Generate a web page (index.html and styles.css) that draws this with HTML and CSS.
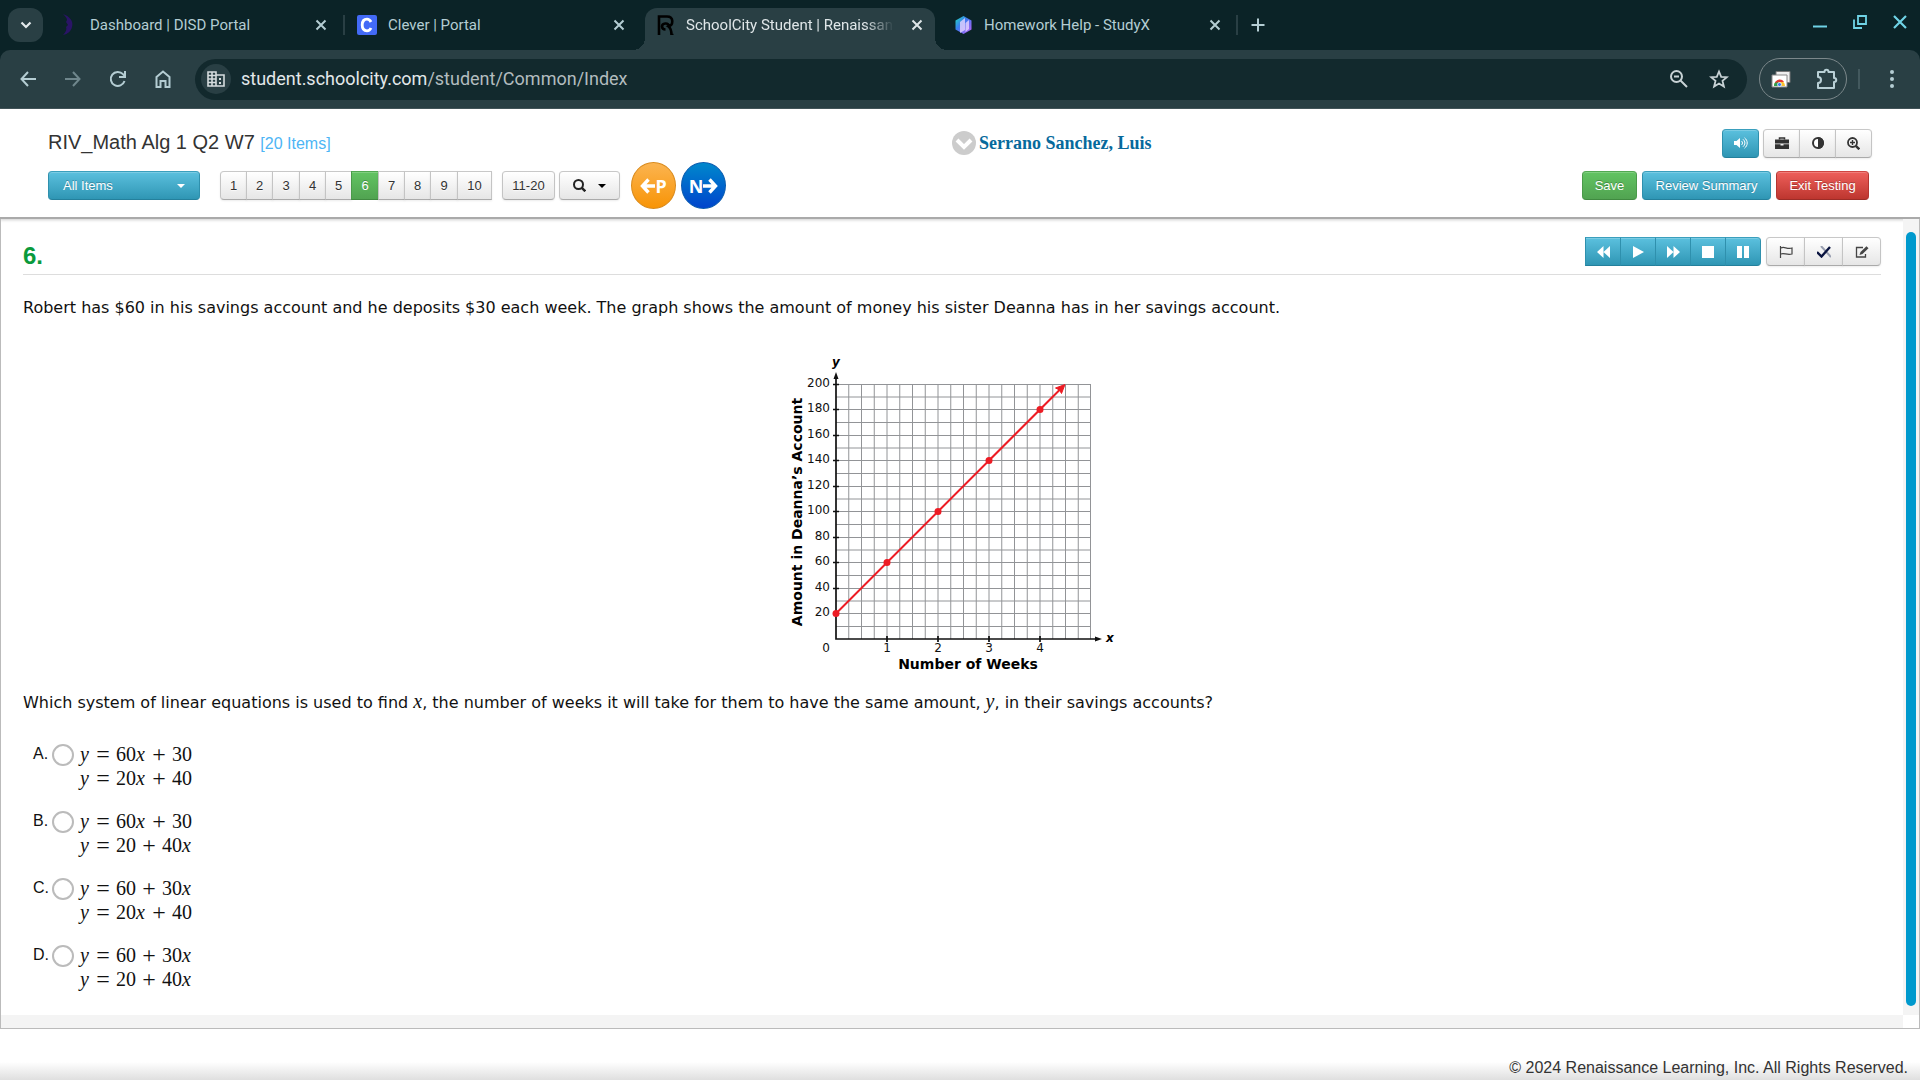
FILE: index.html
```html
<!DOCTYPE html>
<html lang="en">
<head>
<meta charset="utf-8">
<title>SchoolCity Student | Renaissance</title>
<link rel="stylesheet" href="styles.css">
</head>
<body>
<div class="browser">
  <div class="tabstrip">
    <button class="tab-search" aria-label="Search tabs"><svg width="12" height="8" viewBox="0 0 12 8"><path d="M1.500 1.500 6 6l4.500-4.500" fill="none" stroke="#e3eaec" stroke-width="2.200"/></svg></button>
    <div class="tabs">
      <div class="tab">
        <svg class="favicon" width="20" height="24" viewBox="0 0 20 24"><path d="M4 1c6 2 11 7 9 13-1 4-4 7-9 8 3-3 4-6 3-8l2-2-2-3 1-2C8 5 6 3 4 1z" fill="#2a1466"/></svg>
        <span class="tab-title">Dashboard | DISD Portal</span>
        <button class="tab-close" aria-label="Close tab"><svg width="12" height="12" viewBox="0 0 12 12"><path d="M1.500 1.500l9 9m0-9l-9 9" stroke="currentColor" stroke-width="2"/></svg></button>
      </div>
      <div class="tab divided">
        <svg class="favicon" width="20" height="20" viewBox="0 0 20 20"><rect width="20" height="20" rx="2" fill="#436af6"/><path d="M14 7c-1-2-2.500-2.800-4-2.800C7 4.200 5.200 6.500 5.200 10S7 15.800 10 15.800c1.700 0 3.200-1 4-2.800" fill="none" stroke="#fff" stroke-width="2.800"/></svg>
        <span class="tab-title">Clever | Portal</span>
        <button class="tab-close" aria-label="Close tab"><svg width="12" height="12" viewBox="0 0 12 12"><path d="M1.500 1.500l9 9m0-9l-9 9" stroke="currentColor" stroke-width="2"/></svg></button>
      </div>
      <div class="tab active">
        <svg class="favicon" width="20" height="20" viewBox="0 0 20 20"><path d="M4 20V1.500h8c7 0 6.500 8.500 1.500 10 2 1.500 3 4 3 8.500h2M14 11a3.500 3 0 1 0-3.500 3.500" fill="none" stroke="#000" stroke-width="2.600"/></svg>
        <span class="tab-title">SchoolCity Student | Renaissance</span>
        <button class="tab-close" aria-label="Close tab"><svg width="12" height="12" viewBox="0 0 12 12"><path d="M1.500 1.500l9 9m0-9l-9 9" stroke="currentColor" stroke-width="2"/></svg></button>
      </div>
      <div class="tab">
        <svg class="favicon" width="20" height="20" viewBox="0 0 20 20"><defs><linearGradient id="gem" x1="0" y1="0" x2="1" y2="1"><stop offset="0" stop-color="#1fe0b8"/><stop offset=".4" stop-color="#3b7df0"/><stop offset="1" stop-color="#c35cf5"/></linearGradient></defs><path d="M10.500 1l8 4.500v9l-8 4.500-8-4.500v-9z" fill="url(#gem)"/><path d="M7 7l5-4v12l-5 3zM12.500 8l3.500-3v9l-3.500 3z" fill="#e6d4ff" opacity=".8"/></svg>
        <span class="tab-title">Homework Help - StudyX</span>
        <button class="tab-close" aria-label="Close tab"><svg width="12" height="12" viewBox="0 0 12 12"><path d="M1.500 1.500l9 9m0-9l-9 9" stroke="currentColor" stroke-width="2"/></svg></button>
      </div>
    </div>
    <button class="new-tab" aria-label="New tab"><svg width="14" height="14" viewBox="0 0 14 14"><path d="M7 .5v13M.5 7h13" stroke="currentColor" stroke-width="2"/></svg></button>
    <div class="window-controls">
      <button aria-label="Minimize"><svg width="16" height="16" viewBox="0 0 16 16"><path d="M1 12.500h14" stroke="currentColor" stroke-width="2"/></svg></button>
      <button aria-label="Restore"><svg width="16" height="16" viewBox="0 0 16 16"><path d="M6 2h8v8H6zM2 5.500V14h8" fill="none" stroke="currentColor" stroke-width="1.800"/></svg></button>
      <button aria-label="Close"><svg width="16" height="16" viewBox="0 0 16 16"><path d="M2 2l12 12M14 2L2 14" stroke="currentColor" stroke-width="2.200"/></svg></button>
    </div>
  </div>
  <div class="toolbar">
    <div class="nav">
      <button aria-label="Back"><svg width="18" height="18" viewBox="0 0 18 18"><path d="M9 2L2.500 9 9 16M2.500 9H17" fill="none" stroke="currentColor" stroke-width="2"/></svg></button>
      <button class="dim" aria-label="Forward"><svg width="18" height="18" viewBox="0 0 18 18"><path d="M9 2l6.500 7L9 16M15.500 9H1" fill="none" stroke="currentColor" stroke-width="2"/></svg></button>
      <button aria-label="Reload"><svg width="18" height="18" viewBox="0 0 18 18"><path d="M15.500 11A7 7 0 1 1 14 4.200L16 6M16 1v6h-6" fill="none" stroke="currentColor" stroke-width="2"/></svg></button>
      <button aria-label="Home"><svg width="18" height="20" viewBox="0 0 18 20"><path d="M2.500 8L9 2.500 15.500 8v10H11.500v-6h-5v6h-4z" fill="none" stroke="currentColor" stroke-width="2"/></svg></button>
    </div>
    <div class="omnibox">
      <span class="site-chip"><svg width="18" height="16" viewBox="0 0 18 16"><path d="M1 1h8v14H1zM9 4h8v11H9M1 4.500h8M1 8h8M1 11.500h8M5 1v14" fill="none" stroke="#d5dcde" stroke-width="1.600"/><path d="M12 7h2v2h-2zM12 11h2v2h-2z" fill="#d5dcde"/></svg></span>
      <span class="url"><b>student.schoolcity.com</b>/student/Common/Index</span>
      <button aria-label="Zoom"><svg width="20" height="20" viewBox="0 0 20 20"><circle cx="7.500" cy="7.500" r="5.500" fill="none" stroke="currentColor" stroke-width="2"/><path d="M11.500 11.500L18 18M5 7.500h5" stroke="currentColor" stroke-width="2"/></svg></button>
      <button aria-label="Bookmark this page"><svg width="20" height="20" viewBox="0 0 20 20"><path d="M10 2.500l2.200 5.300 5.700.4-4.400 3.700 1.400 5.600L10 14.500l-4.900 3 1.400-5.600-4.400-3.700 5.700-.4z" fill="none" stroke="currentColor" stroke-width="1.800"/></svg></button>
    </div>
    <div class="extensions">
      <button aria-label="Remote desktop"><svg width="20" height="18" viewBox="0 0 20 18"><path d="M5 1.500h14v11H5z" fill="#eee" stroke="#777"/><path d="M1 5h15v12H1z" fill="#fff" stroke="#888"/><path d="M3 16a5.500 5.500 0 0 1 11 0z" fill="#fbc02d"/><path d="M3 16a5.500 5.500 0 0 1 4-5.500L9 16z" fill="#2e9e4f"/><path d="M4 13c1-4 7-5 9-1l-5 0z" fill="#e53a2f"/><circle cx="8.500" cy="14.500" r="2" fill="#3f7de8" stroke="#fff" stroke-width=".7"/></svg></button>
      <button aria-label="Extensions"><svg width="22" height="22" viewBox="0 0 22 22"><path d="M2 4h6.500c0-3 4-3 4 0H18v6c3 0 3 4 0 4v6H2v-5c4 0 4-6 0-6z" fill="none" stroke="#b9d0d6" stroke-width="2" stroke-linejoin="round"/></svg></button>
    </div>
    <span class="bar"></span>
    <button class="menu" aria-label="Menu"><svg width="6" height="20" viewBox="0 0 6 20"><g fill="currentColor"><circle cx="3" cy="3" r="2"/><circle cx="3" cy="10" r="2"/><circle cx="3" cy="17" r="2"/></g></svg></button>
  </div>
</div>

<header class="header">
  <div class="title-row">
    <h1 class="test-title">RIV_Math Alg 1 Q2 W7 <span>[20 Items]</span></h1>
    <a class="student" href="#"><svg width="24" height="24" viewBox="0 0 24 24"><circle cx="12" cy="12" r="12" fill="#ccc"/><path d="M5 9l7 7 7-7" fill="none" stroke="#fff" stroke-width="4"/></svg>Serrano Sanchez, Luis</a>
    <div class="tools">
      <button class="btn info w37" aria-label="Read aloud"><svg width="14" height="12" viewBox="0 0 14 12"><path d="M0 4h2.500L6 1v10L2.500 8H0z" fill="#fff"/><path d="M7.500 4c1.300 1 1.300 3 0 4M9 2.300c2.500 2 2.500 5.400 0 7.400M10.500.8c3.600 2.700 3.600 7.700 0 10.400" fill="none" stroke="#fff"/></svg></button>
      <div class="group">
        <button class="btn w37" aria-label="Toolbox"><svg width="14" height="12" viewBox="0 0 14 12"><path d="M4.500 2.500V1h5v1.500" fill="none" stroke="#333" stroke-width="1.500"/><path d="M0 2.500h14v4H0zM0 7.300h5.500v1.200h3V7.300H14V12H0z" fill="#333"/></svg></button>
        <button class="btn w37" aria-label="Contrast"><svg width="12" height="12" viewBox="0 0 12 12"><circle cx="6" cy="6" r="5" fill="#fff" stroke="#333" stroke-width="2"/><path d="M6 0a6 6 0 0 1 0 12z" fill="#333"/></svg></button>
        <button class="btn w37" aria-label="Magnify"><svg width="13" height="13" viewBox="0 0 13 13"><circle cx="5.500" cy="5.500" r="4.500" fill="none" stroke="#333" stroke-width="1.800"/><path d="M8.800 8.800l3.500 3.500" stroke="#333" stroke-width="2.400"/><path d="M5.500 3v5M3 5.500h5" stroke="#333" stroke-width="1.400"/></svg></button>
      </div>
    </div>
  </div>
  <div class="nav-row">
    <button class="btn info all-items">All Items<i class="caret"></i></button>
    <div class="group pages">
      <button class="btn">1</button><button class="btn">2</button><button class="btn">3</button><button class="btn">4</button><button class="btn">5</button><button class="btn success">6</button><button class="btn">7</button><button class="btn">8</button><button class="btn">9</button><button class="btn ten">10</button>
    </div>
    <button class="btn range">11-20</button>
    <button class="btn search" aria-label="Search items"><svg width="13" height="13" viewBox="0 0 13 13"><circle cx="5.500" cy="5.500" r="4.500" fill="none" stroke="#222" stroke-width="2"/><path d="M8.800 8.800l3.500 3.500" stroke="#222" stroke-width="2.400"/></svg><i class="caret"></i></button>
    <button class="round prev"><svg width="15" height="16" viewBox="0 0 15 16"><path d="M8.500 1.500L2.500 8l6 6.500M3 8h12" fill="none" stroke="#fff" stroke-width="3.400"/></svg>P</button>
    <button class="round next">N<svg width="15" height="16" viewBox="0 0 15 16"><path d="M6.500 1.500l6 6.500-6 6.500M12 8H0" fill="none" stroke="#fff" stroke-width="3.400"/></svg></button>
    <div class="actions">
      <button class="btn success w55">Save</button>
      <button class="btn info w129">Review Summary</button>
      <button class="btn danger w93">Exit Testing</button>
    </div>
  </div>
</header>

<main class="panel">
  <section class="content">
    <div class="question-head">
      <h2>6.</h2>
      <div class="group media">
        <button class="btn info" aria-label="Rewind"><svg width="13" height="12" viewBox="0 0 13 12"><path d="M6.500 0v12L0 6zM13 0v12L6.500 6z" fill="#fff"/></svg></button>
        <button class="btn info" aria-label="Play"><svg width="12" height="12" viewBox="0 0 12 12"><path d="M1 0l11 6-11 6z" fill="#fff"/></svg></button>
        <button class="btn info" aria-label="Forward"><svg width="13" height="12" viewBox="0 0 13 12"><path d="M0 0l6.500 6L0 12zM6.500 0L13 6l-6.500 6z" fill="#fff"/></svg></button>
        <button class="btn info" aria-label="Stop"><svg width="12" height="12" viewBox="0 0 12 12"><path d="M0 0h12v12H0z" fill="#fff"/></svg></button>
        <button class="btn info" aria-label="Pause"><svg width="12" height="12" viewBox="0 0 12 12"><path d="M0 0h5v12H0zM7 0h5v12H7z" fill="#fff"/></svg></button>
      </div>
      <div class="group marks">
        <button class="btn" aria-label="Flag"><svg width="14" height="12" viewBox="0 0 14 12"><path d="M1.500 0v12M2 2c3-2 6 1.500 11 0v6c-5 1.500-8-1.500-11 0" fill="none" stroke="#444" stroke-width="1.200"/></svg></button>
        <button class="btn" aria-label="Eliminate choices"><svg width="14" height="12" viewBox="0 0 14 12"><path d="M4 0l10 11" stroke="#999fb0" stroke-width="2"/><path d="M0 6l4.500 4.500L13 1" fill="none" stroke="#0a1440" stroke-width="2.400"/></svg></button>
        <button class="btn" aria-label="Notes"><svg width="14" height="12" viewBox="0 0 14 12"><path d="M8 1.500H1.500v9.500h9V8" fill="none" stroke="#444" stroke-width="1.300"/><path d="M4.500 9l1-3L11.500.3l2 2L7.500 8z" fill="#444"/></svg></button>
      </div>
    </div>
    <p class="stem">Robert has $60 in his savings account and he deposits $30 each week. The graph shows the amount of money his sister Deanna has in her savings account.</p>
    <figure class="graph">
      <svg width="360" height="340" viewBox="0 0 360 340" role="img" aria-label="Line through (0, 20), (1, 60), (2, 100), (3, 140) and (4, 180)">
        <path d="M78.750 44V299M91.500 44V299M104.250 44V299M117 44V299M129.750 44V299M142.500 44V299M155.250 44V299M168 44V299M180.750 44V299M193.500 44V299M206.250 44V299M219 44V299M231.750 44V299M244.500 44V299M257.250 44V299M270 44V299M282.750 44V299M295.500 44V299M308.250 44V299M320.500 44V299M66 44.500H321M66 57H321M66 69.500H321M66 82.500H321M66 95.500H321M66 108H321M66 120.500H321M66 133.500H321M66 146.500H321M66 159H321M66 171.500H321M66 184.500H321M66 197.500H321M66 210H321M66 222.500H321M66 235.500H321M66 248.500H321M66 261H321M66 273.500H321M66 286.500H321" stroke="#929497" fill="none"/>
        <path d="M66 38V299H326M63 44.500h6M63 69.500h6M63 95.500h6M63 120.500h6M63 146.500h6M63 171.500h6M63 197.500h6M63 222.500h6M63 248.500h6M63 273.500h6M117 296v6M168 296v6M219 296v6M270 296v6" stroke="#111" stroke-width="1.700" fill="none"/>
        <path d="M66 32l2.500 7h-5zM332 299l-7 2.500v-5z" fill="#111"/>
        <path d="M66 273.500L290 49.500" stroke="#ed1c24" stroke-width="2"/>
        <path d="M295 44.500l-3.500 9-2-3.500-4-2z" fill="#ed1c24" stroke="#ed1c24"/>
        <g fill="#ed1c24"><circle cx="66" cy="273.500" r="3.500"/><circle cx="117" cy="222.500" r="3.500"/><circle cx="168" cy="171.500" r="3.500"/><circle cx="219" cy="120.500" r="3.500"/><circle cx="270" cy="69.500" r="3.500"/></g>
        <g class="ticks" text-anchor="end"><text x="60" y="47">200</text><text x="60" y="72">180</text><text x="60" y="98">160</text><text x="60" y="123">140</text><text x="60" y="149">120</text><text x="60" y="174">100</text><text x="60" y="200">80</text><text x="60" y="225">60</text><text x="60" y="251">40</text><text x="60" y="276">20</text><text x="60" y="312">0</text></g>
        <g class="ticks" text-anchor="middle"><text x="117" y="312">1</text><text x="168" y="312">2</text><text x="219" y="312">3</text><text x="270" y="312">4</text></g>
        <text class="axis-letter" x="62" y="26">y</text><text class="axis-letter" x="336" y="302">x</text>
        <text class="axis-title" x="198" y="329" text-anchor="middle">Number of Weeks</text>
        <text class="axis-title" transform="translate(32 172) rotate(-90)" text-anchor="middle">Amount in Deanna’s Account</text>
      </svg>
    </figure>
    <p class="stem">Which system of linear equations is used to find <var>x</var>, the number of weeks it will take for them to have the same amount, <var>y</var>, in their savings accounts?</p>
    <div class="choices">
      <label class="choice"><span class="letter">A.</span><input type="radio" name="answer"><span class="system"><span><var>y</var><i>=</i>60<var>x</var><i>+</i>30</span><span><var>y</var><i>=</i>20<var>x</var><i>+</i>40</span></span></label>
      <label class="choice"><span class="letter">B.</span><input type="radio" name="answer"><span class="system"><span><var>y</var><i>=</i>60<var>x</var><i>+</i>30</span><span><var>y</var><i>=</i>20<i>+</i>40<var>x</var></span></span></label>
      <label class="choice"><span class="letter">C.</span><input type="radio" name="answer"><span class="system"><span><var>y</var><i>=</i>60<i>+</i>30<var>x</var></span><span><var>y</var><i>=</i>20<var>x</var><i>+</i>40</span></span></label>
      <label class="choice"><span class="letter">D.</span><input type="radio" name="answer"><span class="system"><span><var>y</var><i>=</i>60<i>+</i>30<var>x</var></span><span><var>y</var><i>=</i>20<i>+</i>40<var>x</var></span></span></label>
    </div>
  </section>
  <div class="track-y"><div class="thumb"></div></div>
  <div class="track-x"></div>
</main>
<footer class="footer">© 2024 Renaissance Learning, Inc. All Rights Reserved.</footer>
</body>
</html>
```
FILE: styles.css
```css
* { box-sizing: border-box; }
body {
  margin: 0;
  min-height: 100vh;
  display: flex;
  flex-direction: column;
  background: #fff;
  color: #333;
  font-family: "Liberation Sans", Arial, sans-serif;
}
button { font: inherit; border: 0; padding: 0; background: none; color: inherit; }
button, .student, .site-chip { display: flex; align-items: center; justify-content: center; }
svg { display: block; flex: none; }

/* Browser frame */
.browser { background: #0b2327; color: #b4cdd3; font-family: Roboto, sans-serif; }
.tabstrip { display: flex; height: 50px; padding: 8px 12px 0 8px; }
.tab-search { width: 35px; height: 34px; border-radius: 12px; background: #293f44; }
.tabs { display: flex; flex: 0 1 1191px; gap: 8px; min-width: 0; margin-left: 2px; padding-left: 4px; }
.tab {
  position: relative;
  display: flex;
  flex: 0 1 290px;
  min-width: 0;
  align-items: center;
  height: 42px;
  padding: 0 11px 8px 10px;
}
.tab-title {
  flex: 1;
  margin: 0 16px 0 11px;
  overflow: hidden;
  white-space: nowrap;
  font-size: 15px;
  line-height: 20px;
}
.tab-close { width: 14px; height: 20px; }
.active { background: #293f44; border-radius: 12px 12px 0 0; color: #dfe6e8; }
.active .tab-title {
  -webkit-mask-image: linear-gradient(90deg, #000 86%, transparent);
  mask-image: linear-gradient(90deg, #000 86%, transparent);
}
.active::before, .active::after {
  content: "";
  position: absolute;
  bottom: 0;
  width: 12px;
  height: 12px;
}
.active::before { left: -12px; background: radial-gradient(circle at 0 0, transparent 12px, #293f44 12px); }
.active::after { right: -12px; background: radial-gradient(circle at 100% 0, transparent 12px, #293f44 12px); }
.divided::before { content: ""; position: absolute; left: -4px; top: 7px; width: 2px; height: 20px; background: #293f44; }
.new-tab { width: 38px; height: 20px; margin-top: 7px; padding-left: 4px; border-left: 2px solid #293f44; }
.window-controls { display: flex; gap: 24px; height: 28px; margin-left: auto; color: #6fd3e6; }
.window-controls button { width: 16px; }
.toolbar {
  display: flex;
  align-items: center;
  height: 59px;
  padding: 0 24px 0 16px;
  background: #293f44;
  border-bottom: 1px solid #44565b;
  border-radius: 10px 10px 0 0;
}
.nav { display: flex; gap: 22px; padding-right: 21px; }
.nav button { width: 23px; }
.dim { opacity: .5; }
.omnibox {
  display: flex;
  flex: 1;
  align-items: center;
  gap: 20px;
  height: 41px;
  padding: 0 18px 0 6px;
  border-radius: 21px;
  background: #12292d;
  color: #c8d2d5;
}
.site-chip { width: 30px; height: 30px; border-radius: 50%; background: #293f44; }
.url { flex: 1; margin-left: -10px; font-size: 18px; line-height: 24px; color: #b3bcbf; }
.url b { font-weight: 400; color: #e3e8ea; }
.extensions {
  display: flex;
  align-items: center;
  justify-content: space-between;
  width: 88px;
  height: 42px;
  margin-left: 12px;
  padding: 0 8px 0 11px;
  border: 1px solid #7c888b;
  border-radius: 21px;
}
.bar { width: 2px; height: 20px; margin: 0 29px 0 11px; background: #43595e; }
.menu { width: 6px; margin-right: 1px; }

/* Bootstrap-like buttons */
.btn {
  height: 29px;
  padding: 0;
  border: 1px solid #bbb;
  border-color: #c8c8c8 #c4c4c4 #aaa;
  border-radius: 4px;
  background: linear-gradient(#fff, #e6e6e6);
  color: #333;
  font-size: 13px;
  line-height: 20px;
  text-shadow: 0 1px 1px rgba(255, 255, 255, .75);
  box-shadow: 0 1px 2px rgba(0, 0, 0, .08);
}
.info, .success, .danger { color: #fff; text-shadow: 0 -1px 0 rgba(0, 0, 0, .25); box-shadow: inset 0 1px 0 rgba(255, 255, 255, .2); }
.info { background: linear-gradient(#5bc0de, #2f96b4); border-color: #3a9fbd #2f90ad #24809c; }
.success { background: linear-gradient(#62c462, #51a351); border-color: #51a851 #4a9a4a #408a40; }
.danger { background: linear-gradient(#ee5f5b, #bd362f); border-color: #cf4541 #b53530 #9c2c27; }
.group { display: flex; }
.group .btn { border-radius: 0; }
.group .btn + .btn { margin-left: -1px; }
.group .btn:first-child { border-radius: 4px 0 0 4px; }
.group .btn:last-child { border-radius: 0 4px 4px 0; }
.w37 { width: 37px; }
.w55 { width: 55px; }
.w93 { width: 93px; }
.w129 { width: 129px; }
.caret { border: 4px solid transparent; border-top-color: currentColor; border-bottom: 0; }

/* Test header */
.header {
  display: flex;
  flex-direction: column;
  gap: 4px;
  padding: 19px 48px 8px;
  border-bottom: 2px solid #aaa;
  box-shadow: 0 1px 3px rgba(0, 0, 0, .2);
}
.title-row { display: grid; grid-template-columns: 904fr 770fr auto; align-items: center; }
.test-title { margin: 0; font-size: 20px; line-height: 28px; font-weight: 400; }
.test-title span { font-size: 16px; color: #4db5f5; }
.student {
  justify-content: flex-start;
  gap: 3px;
  color: #06699c;
  font: bold 18px/24px "Liberation Serif", "Times New Roman", serif;
  text-decoration: none;
}
.tools { display: flex; gap: 4px; }
.nav-row { display: flex; align-items: center; height: 47px; }
.all-items { width: 152px; justify-content: space-between; padding: 0 14px; margin-right: 20px; }
.pages .btn { width: 27px; }
.pages .btn:nth-child(3n) { width: 28px; }
.pages .btn.ten { width: 35px; border-radius: 0; }
.pages { margin-right: 10px; }
.range { width: 53px; margin-right: 4px; }
.search { width: 61px; gap: 12px; margin-right: 11px; color: #000; }
.round {
  width: 45px;
  height: 47px;
  margin-right: 5px;
  border-radius: 50%;
  color: #fff;
  font: bold 18px/20px "Noto Sans", sans-serif;
}
.prev { background: linear-gradient(#fbb450, #f89406); border: 1px solid #d98a1c; }
.next { background: linear-gradient(#0088cc, #0044cc); border: 1px solid #0a5cb0; }
.actions { display: flex; gap: 5px; margin: 0 3px 0 auto; }

/* Question panel */
.panel {
  flex: 1;
  display: grid;
  grid-template: 1fr 13px / 1fr 16px;
  border: 1px solid #bbb;
  border-top: 0;
}
.content { padding: 18px 22px 20px; }
.question-head { display: flex; height: 38px; border-bottom: 1px solid #ddd; }
.question-head h2 { margin: 5px auto 0 0; color: #0a9a3c; font-size: 24px; line-height: 28px; }
.media .btn { width: 36px; }
.media { margin-right: 5px; }
.marks .btn { width: 39px; }
.group.media .btn:first-child { border-radius: 0; }
.stem { margin: 20px 0 0; color: #111; font: 16px/26px "DejaVu Sans", Verdana, sans-serif; }
.graph { display: flex; justify-content: center; margin: 19px 0 -10px; padding-right: 5px; }
var { font-family: "Liberation Serif", serif; font-size: 20px; line-height: 20px; }
.ticks { font: 12px "DejaVu Sans", sans-serif; fill: #111; }
.axis-letter { font: italic bold 12px "DejaVu Sans", sans-serif; }
.axis-title { font: bold 14px "DejaVu Sans", sans-serif; fill: #000; }
.choices { display: flex; flex-direction: column; gap: 19px; margin-top: 26px; padding-left: 10px; color: #111; }
.choice { display: flex; align-items: flex-start; }
.letter { width: 19px; font-size: 16px; line-height: 24px; }
.choice input {
  appearance: none;
  width: 22px;
  height: 22px;
  margin: 2px 6px 0 0;
  border: 2px solid #bbb;
  border-radius: 50%;
  background: #fff;
}
.system { display: flex; flex-direction: column; font: 20px/24px "Liberation Serif", serif; }
.system > span { display: flex; }
.system var { width: 10px; line-height: 24px; }
.system i { width: 14px; margin: 0 6px; font-style: normal; font-size: 24px; text-align: center; }
.track-y { padding: 13px 3px 9px; background: #f4f4f4; }
.thumb { height: 100%; border-radius: 5px; background: #0099cd; }
.track-x { background: #f4f4f4; }
.footer {
  height: 51px;
  padding: 27px 12px 0;
  background: linear-gradient(#fff 33px, #dfdfdf);
  font-size: 16px;
  line-height: 24px;
  text-align: right;
}
```
